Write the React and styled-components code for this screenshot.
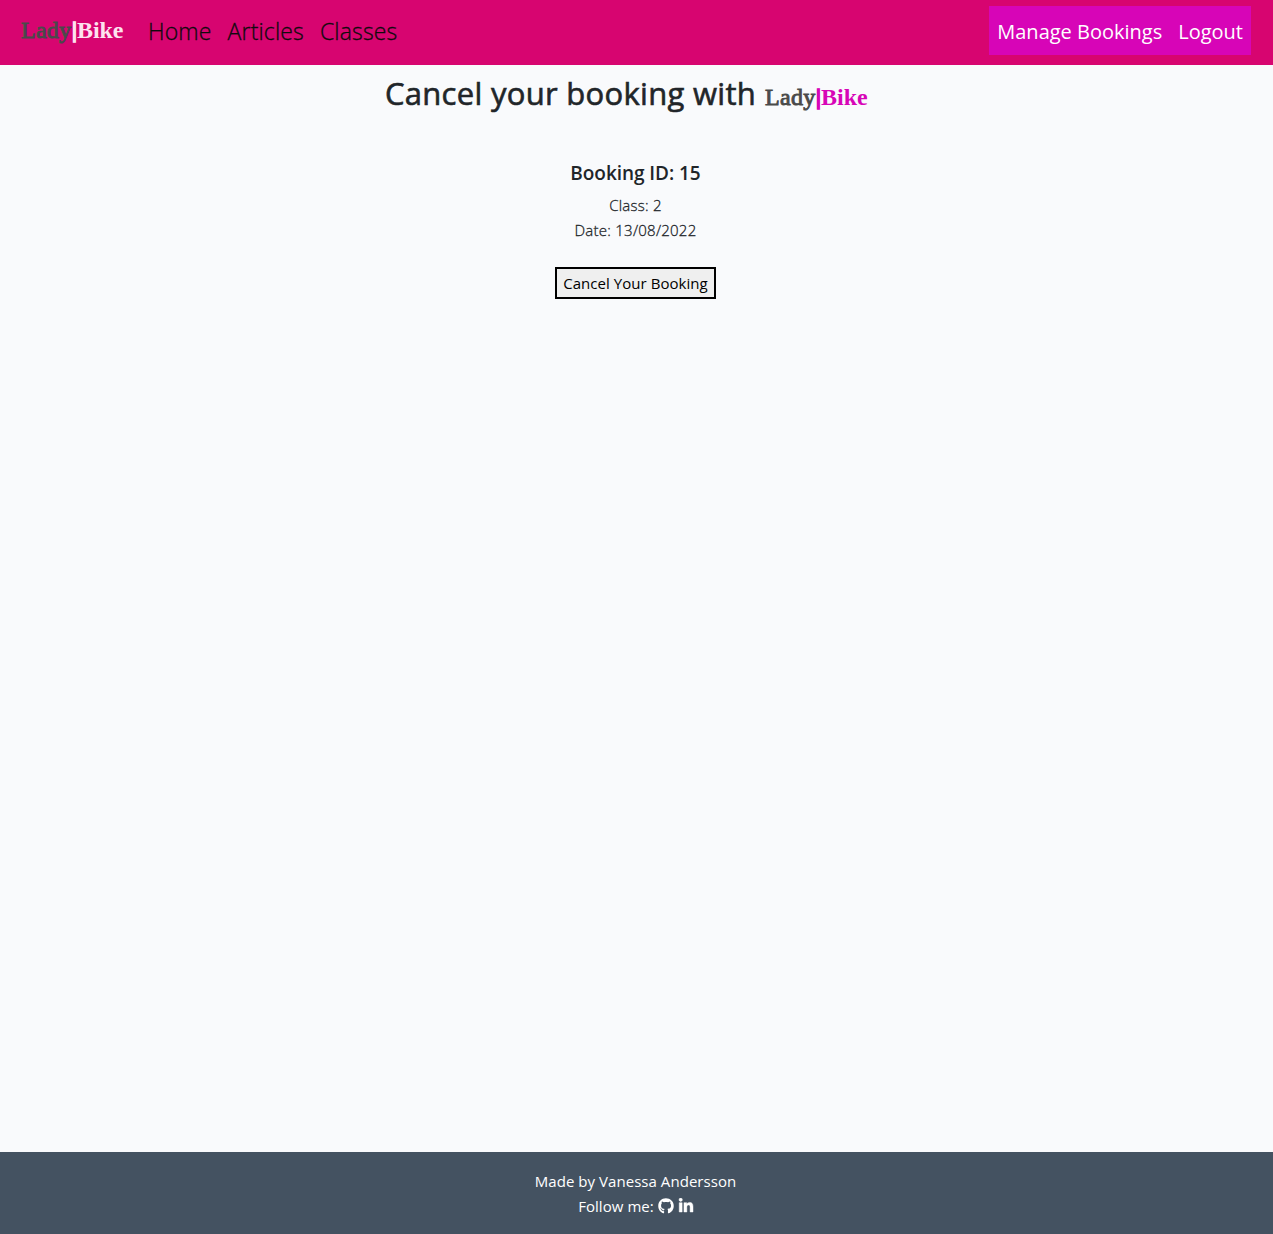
import React from "react";
import styled, { createGlobalStyle } from "styled-components";
import { FaGithub, FaLinkedinIn } from "react-icons/fa";

const GlobalStyle = createGlobalStyle`
  *, *::before, *::after { box-sizing: border-box; }
  body {
    margin: 0;
    background: #f9fafc;
    color: #212529;
    font-family: "Open Sans", "Noto Sans", sans-serif;
    font-size: 15px;
    line-height: 25px;
  }
`;

const Page = styled.div`
  display: flex;
  flex-direction: column;
  min-height: 100vh;
`;

const Navbar = styled.nav`
  display: flex;
  align-items: flex-start;
  height: 65px;
  padding: 6px 22px 0 21px;
  background: #d70570;
`;

const Logo = styled.span`
  display: inline-flex;
  width: 103px;
  font-family: "Liberation Serif", serif;
  font-size: 24px;
  font-weight: 700;
  line-height: 48px;
  letter-spacing: -0.05px;
  color: ${(p) => p.$accent};
`;

const LogoFirst = styled.span`
  width: 50px;
  font-weight: 400;
  letter-spacing: 0.25px;
  color: #4a4a4a;
  -webkit-text-stroke: 0.9px #4a4a4a;
`;

const LogoBar = styled.span`
  width: 6px;
  padding-left: 1px;
  font-size: 22px;
  -webkit-text-stroke: 1.6px currentColor;
`;

const NavLinks = styled.div`
  display: flex;
  margin-left: 16px;
`;

const NavLink = styled.a`
  padding: 0 8px;
  font-size: 23px;
  font-weight: 300;
  line-height: 51px;
  letter-spacing: 0.15px;
  color: #100a0d;
  -webkit-text-stroke: 0.3px #100a0d;
`;

const AccountLinks = styled.div`
  display: flex;
  margin-left: auto;
  height: 49px;
  background: #d705b7;
`;

const AccountLink = styled.a`
  padding: 0 8px;
  font-size: 20px;
  line-height: 51px;
  color: #fff;
`;

const Main = styled.main`
  display: flex;
  flex: 1;
  flex-direction: column;
  align-items: center;
`;

const Title = styled.h1`
  display: flex;
  align-items: baseline;
  gap: 9px;
  margin: 3px 20px 0 0;
  font-size: 31px;
  font-weight: 400;
  line-height: 50px;
`;

const TitleText = styled.span`
  letter-spacing: 0.3px;
  -webkit-text-stroke: 0.6px #212529;
`;

const Booking = styled.section`
  display: flex;
  flex-direction: column;
  align-items: center;
  margin: 40px 2px 0 0;
`;

const BookingTitle = styled.h2`
  margin: 0 0 8px;
  font-size: 19px;
  font-weight: 600;
  line-height: 24px;
  letter-spacing: -0.05px;
`;

const Detail = styled.p`
  margin: 0;
  font-weight: 300;
  letter-spacing: 0.25px;
  -webkit-text-stroke: 0.3px #212529;
`;

const CancelButton = styled.button`
  width: 161px;
  height: 32px;
  margin-top: 24px;
  padding: 0;
  border: 2px solid #000;
  background: #efefef;
  color: #000;
  font: inherit;
  letter-spacing: 0.05px;
  white-space: nowrap;
`;

const Footer = styled.footer`
  display: flex;
  flex-direction: column;
  align-items: center;
  height: 82px;
  padding: 17px 2px 0 0;
  background: #445261;
  color: #fff;
  letter-spacing: 0.05px;
`;

const FollowRow = styled.div`
  display: flex;
  align-items: center;
  gap: 4px;
  padding-left: 1px;

  svg {
    margin-bottom: 2px;
  }

  svg:last-child {
    stroke: #fff;
    stroke-width: 14px;
  }
`;

function Brand({ accent }) {
  return (
    <Logo $accent={accent}>
      <LogoFirst>Lady</LogoFirst>
      <LogoBar>|</LogoBar>
      <span>Bike</span>
    </Logo>
  );
}

export default function App() {
  return (
    <Page>
      <GlobalStyle />
      <Navbar>
        <Brand accent="#fde3ef" />
        <NavLinks>
          <NavLink>Home</NavLink>
          <NavLink>Articles</NavLink>
          <NavLink>Classes</NavLink>
        </NavLinks>
        <AccountLinks>
          <AccountLink>Manage Bookings</AccountLink>
          <AccountLink>Logout</AccountLink>
        </AccountLinks>
      </Navbar>
      <Main>
        <Title>
          <TitleText>Cancel your booking with</TitleText>
          <Brand accent="#d705b7" />
        </Title>
        <Booking>
          <BookingTitle>Booking ID: 15</BookingTitle>
          <Detail>Class: 2</Detail>
          <Detail>Date: 13/08/2022</Detail>
          <CancelButton>Cancel Your Booking</CancelButton>
        </Booking>
      </Main>
      <Footer>
        <div>Made by Vanessa Andersson</div>
        <FollowRow>
          <span>Follow me:</span>
          <FaGithub size={16} />
          <FaLinkedinIn size={16} />
        </FollowRow>
      </Footer>
    </Page>
  );
}
